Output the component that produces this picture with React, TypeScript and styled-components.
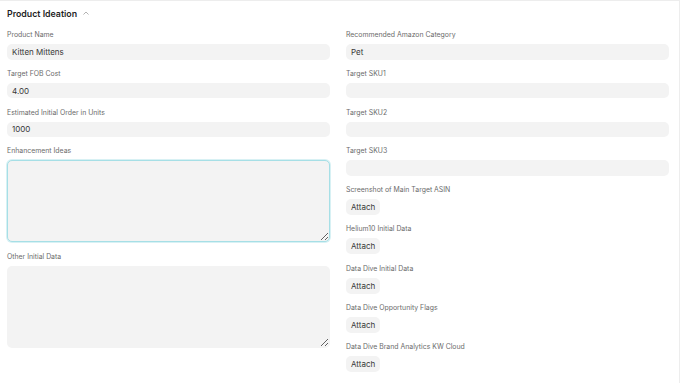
import styled, { createGlobalStyle } from 'styled-components';

const GlobalStyle = createGlobalStyle`
  html, body {
    margin: 0;
    padding: 0;
    background: #ffffff;
  }
  body {
    font-family: Inter, "Noto Sans", sans-serif;
    -webkit-font-smoothing: antialiased;
  }
`;

const Card = styled.section`
  width: 680px;
  height: 383px;
  box-sizing: border-box;
  border-top: 1px solid #ededed;
  border-right: 1px solid #ededed;
  padding: 0 10px 0 7px;
  overflow: hidden;
`;

const Header = styled.div`
  display: flex;
  align-items: center;
  gap: 5px;
  height: 24px;
`;

const Title = styled.h2`
  margin: 0;
  font-size: 8.8px;
  font-weight: 600;
  color: #1f1f1f;
`;

const Columns = styled.div`
  display: grid;
  grid-template-columns: 1fr 1fr;
  column-gap: 16px;
  margin-top: 5px;
`;

const Column = styled.div`
  display: flex;
  flex-direction: column;
  gap: 9.3px;
`;

const Field = styled.div`
  display: flex;
  flex-direction: column;
  align-items: flex-start;
  gap: 4px;
`;

const Label = styled.label`
  font-size: 6.9px;
  line-height: 10px;
  color: #6b6b6b;
`;

const Input = styled.input`
  width: 100%;
  box-sizing: border-box;
  height: 15.5px;
  border: none;
  border-radius: 5px;
  background: #f3f3f3;
  padding: 0 5px;
  font-family: inherit;
  font-size: 8px;
  color: #383838;
  outline: none;
`;

const TextArea = styled.textarea<{ $focused?: boolean }>`
  width: 100%;
  box-sizing: border-box;
  height: 82px;
  border: 1px solid ${(p) => (p.$focused ? '#a6dfe6' : 'transparent')};
  box-shadow: ${(p) => (p.$focused ? '0 0 0 1px #d8f1f4' : 'none')};
  border-radius: 5px;
  background: #f3f3f3;
  padding: 4px 5px;
  font-family: inherit;
  font-size: 8px;
  color: #383838;
  resize: vertical;
  outline: none;
`;

const AttachButton = styled.button`
  height: 16px;
  padding: 0 5px;
  border: none;
  border-radius: 5px;
  background: #f3f3f3;
  font-family: inherit;
  font-size: 8px;
  color: #383838;
  cursor: pointer;
`;

const ChevronUp = () => (
  <svg width="8" height="8" viewBox="0 0 16 16" fill="none">
    <path d="M3.5 10.5 8 6l4.5 4.5" stroke="#8a8a8a" strokeWidth="1.3" strokeLinecap="round" strokeLinejoin="round" />
  </svg>
);

const leftInputs = [
  { label: 'Product Name', value: 'Kitten Mittens' },
  { label: 'Target FOB Cost', value: '4.00' },
  { label: 'Estimated Initial Order in Units', value: '1000' },
];

const rightInputs = [
  { label: 'Recommended Amazon Category', value: 'Pet' },
  { label: 'Target SKU1', value: '' },
  { label: 'Target SKU2', value: '' },
  { label: 'Target SKU3', value: '' },
];

const attachments = [
  'Screenshot of Main Target ASIN',
  'Helium10 Initial Data',
  'Data Dive Initial Data',
  'Data Dive Opportunity Flags',
  'Data Dive Brand Analytics KW Cloud',
];

export default function App() {
  return (
    <>
      <GlobalStyle />
      <Card>
        <Header>
          <Title>Product Ideation</Title>
          <ChevronUp />
        </Header>
        <Columns>
          <Column>
            {leftInputs.map((f) => (
              <Field key={f.label}>
                <Label>{f.label}</Label>
                <Input defaultValue={f.value} />
              </Field>
            ))}
            <Field>
              <Label>Enhancement Ideas</Label>
              <TextArea $focused />
            </Field>
            <Field>
              <Label>Other Initial Data</Label>
              <TextArea />
            </Field>
          </Column>
          <Column>
            {rightInputs.map((f) => (
              <Field key={f.label}>
                <Label>{f.label}</Label>
                <Input defaultValue={f.value} />
              </Field>
            ))}
            {attachments.map((a) => (
              <Field key={a}>
                <Label>{a}</Label>
                <AttachButton>Attach</AttachButton>
              </Field>
            ))}
          </Column>
        </Columns>
      </Card>
    </>
  );
}
